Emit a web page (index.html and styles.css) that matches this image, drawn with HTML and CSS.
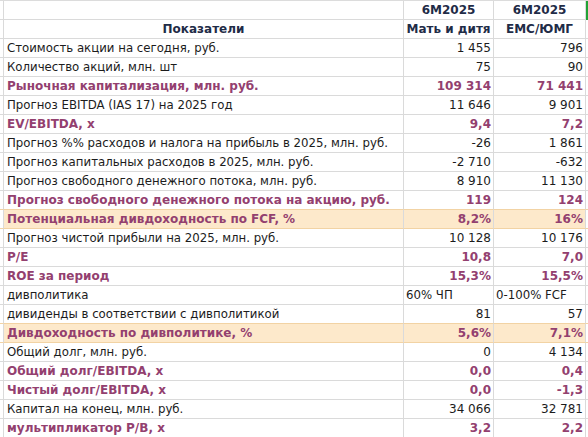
FILE: index.html
```html
<!DOCTYPE html>
<html lang="ru">
<head>
<meta charset="utf-8">
<link rel="stylesheet" href="styles.css">
</head>
<body>
<div class="sheet">
  <div class="row head">
    <div class="c stub"></div><div class="c label"></div><div class="c num hc">6M2025</div><div class="c num hc">6M2025</div><div class="c tail sel"></div>
  </div>
  <div class="row head">
    <div class="c stub"></div><div class="c label hc">Показатели</div><div class="c num hc">Мать и дитя</div><div class="c num hc">ЕМС/ЮМГ</div><div class="c tail"></div>
  </div>
  <div class="row"><div class="c stub"></div><div class="c label">Стоимость акции на сегодня, руб.</div><div class="c num">1 455</div><div class="c num">796</div><div class="c tail"></div></div>
  <div class="row"><div class="c stub"></div><div class="c label">Количество акций, млн. шт</div><div class="c num">75</div><div class="c num">90</div><div class="c tail"></div></div>
  <div class="row key"><div class="c stub"></div><div class="c label">Рыночная капитализация, млн. руб.</div><div class="c num">109 314</div><div class="c num">71 441</div><div class="c tail"></div></div>
  <div class="row"><div class="c stub"></div><div class="c label">Прогноз EBITDA (IAS 17) на 2025 год</div><div class="c num">11 646</div><div class="c num">9 901</div><div class="c tail"></div></div>
  <div class="row key"><div class="c stub"></div><div class="c label">EV/EBITDA, x</div><div class="c num">9,4</div><div class="c num">7,2</div><div class="c tail"></div></div>
  <div class="row"><div class="c stub"></div><div class="c label">Прогноз %% расходов и налога на прибыль в 2025, млн. руб.</div><div class="c num">-26</div><div class="c num">1 861</div><div class="c tail"></div></div>
  <div class="row"><div class="c stub"></div><div class="c label">Прогноз капитальных расходов в 2025, млн. руб.</div><div class="c num">-2 710</div><div class="c num">-632</div><div class="c tail"></div></div>
  <div class="row"><div class="c stub"></div><div class="c label">Прогноз свободного денежного потока, млн. руб.</div><div class="c num">8 910</div><div class="c num">11 130</div><div class="c tail"></div></div>
  <div class="row key pre-hl"><div class="c stub"></div><div class="c label">Прогноз свободного денежного потока на акцию, руб.</div><div class="c num">119</div><div class="c num">124</div><div class="c tail"></div></div>
  <div class="row key hl"><div class="c stub"></div><div class="c label">Потенциальная дивдоходность по FCF, %</div><div class="c num">8,2%</div><div class="c num">16%</div><div class="c tail"></div></div>
  <div class="row"><div class="c stub"></div><div class="c label">Прогноз чистой прибыли на 2025, млн. руб.</div><div class="c num">10 128</div><div class="c num">10 176</div><div class="c tail"></div></div>
  <div class="row key"><div class="c stub"></div><div class="c label">P/E</div><div class="c num">10,8</div><div class="c num">7,0</div><div class="c tail"></div></div>
  <div class="row key"><div class="c stub"></div><div class="c label">ROE за период</div><div class="c num">15,3%</div><div class="c num">15,5%</div><div class="c tail"></div></div>
  <div class="row"><div class="c stub"></div><div class="c label">дивполитика</div><div class="c txt">60% ЧП</div><div class="c txt">0-100% FCF</div><div class="c tail"></div></div>
  <div class="row pre-hl"><div class="c stub"></div><div class="c label">дивиденды в соответствии с дивполитикой</div><div class="c num">81</div><div class="c num">57</div><div class="c tail"></div></div>
  <div class="row key hl"><div class="c stub"></div><div class="c label">Дивдоходность по дивполитике, %</div><div class="c num">5,6%</div><div class="c num">7,1%</div><div class="c tail"></div></div>
  <div class="row"><div class="c stub"></div><div class="c label">Общий долг, млн. руб.</div><div class="c num">0</div><div class="c num">4 134</div><div class="c tail"></div></div>
  <div class="row key"><div class="c stub"></div><div class="c label">Общий долг/EBITDA, x</div><div class="c num">0,0</div><div class="c num">0,4</div><div class="c tail"></div></div>
  <div class="row key"><div class="c stub"></div><div class="c label">Чистый долг/EBITDA, x</div><div class="c num">0,0</div><div class="c num">-1,3</div><div class="c tail"></div></div>
  <div class="row"><div class="c stub"></div><div class="c label">Капитал на конец, млн. руб.</div><div class="c num">34 066</div><div class="c num">32 781</div><div class="c tail"></div></div>
  <div class="row key"><div class="c stub"></div><div class="c label">мультипликатор P/B, x</div><div class="c num">3,2</div><div class="c num">2,2</div><div class="c tail"></div></div>
</div>
</body>
</html>
```
FILE: styles.css
```css
html, body {
  margin: 0;
  padding: 0;
  background: #ffffff;
}
body {
  font-family: "DejaVu Sans", Verdana, sans-serif;
  font-size: 11.75px;
  color: #1c1c1c;
  overflow: hidden;
}
.sheet {
  width: 588px;
  border-top: 1px solid #dcdcdc;
}
.row {
  display: grid;
  grid-template-columns: 4px 400px 90px 92px 2px;
  height: 19px;
}
.c {
  box-sizing: border-box;
  height: 19px;
  border-right: 1px solid #dadada;
  border-bottom: 1px solid #dadada;
  line-height: 18px;
  white-space: nowrap;
  overflow: hidden;
}
.tail {
  border-right: none;
}
.sel {
  background: #21a336;
  border-bottom-color: #21a336;
}
.label {
  padding-left: 3px;
}
.num {
  text-align: right;
  padding-right: 2px;
  font-size: 12px;
}
.txt {
  text-align: left;
  padding-left: 2px;
}
.hc {
  text-align: center;
  font-weight: bold;
  font-size: 12px;
  color: #1f2c47;
  padding: 0;
}
.key .label, .key .num {
  font-weight: bold;
  font-size: 12px;
  color: #93406f;
}
.hl .c {
  background: #fde9cb;
  border-bottom-color: #f2d3a4;
}
.hl .stub, .hl .tail {
  background: #ffffff;
}
.pre-hl .c {
  border-bottom-color: #f2d3a4;
}
```
